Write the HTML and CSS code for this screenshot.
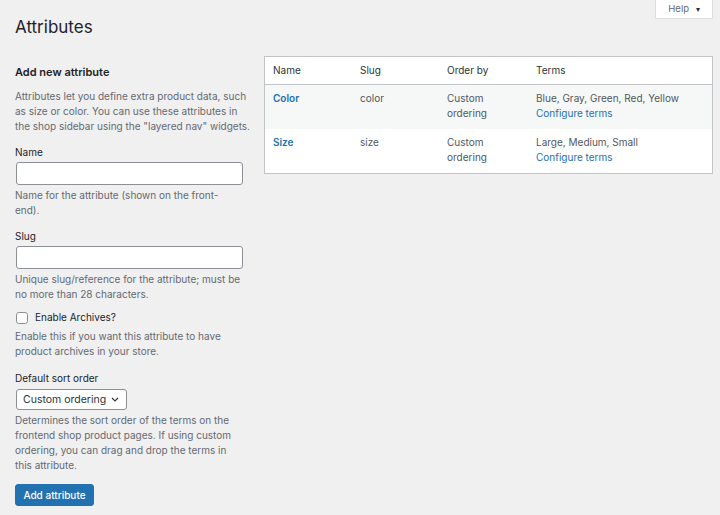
FILE: index.html
```html
<!DOCTYPE html>
<html lang="en">
<head>
    <meta charset="UTF-8">
    <meta name="viewport" content="width=device-width, initial-scale=1.0">
    <title>Attributes</title>
    <link rel="stylesheet" href="styles.css">
</head>
<body>
    <div class="help-tab">Help <span class="caret">&#9662;</span></div>
    <div class="wrap">
        <h1>Attributes</h1>
        <div class="columns">
            <div class="col-left">
                <h2>Add new attribute</h2>
                <p class="intro">Attributes let you define extra product data, such as size or color. You can use these attributes in the shop sidebar using the "layered nav" widgets.</p>

                <label class="field-label" for="attr-name">Name</label>
                <input type="text" id="attr-name" class="text-input">
                <p class="help">Name for the attribute (shown on the front-end).</p>

                <label class="field-label" for="attr-slug">Slug</label>
                <input type="text" id="attr-slug" class="text-input">
                <p class="help">Unique slug/reference for the attribute; must be no more than 28 characters.</p>

                <label class="check-row"><span class="checkbox"></span>Enable Archives?</label>
                <p class="help">Enable this if you want this attribute to have product archives in your store.</p>

                <label class="field-label sort-label">Default sort order</label>
                <div class="select">Custom ordering
                    <svg width="8" height="5" viewBox="0 0 8 5"><path d="M1 1l3 3 3-3" fill="none" stroke="#2c3338" stroke-width="1.1"/></svg>
                </div>
                <p class="help">Determines the sort order of the terms on the frontend shop product pages. If using custom ordering, you can drag and drop the terms in this attribute.</p>

                <button class="button-primary">Add attribute</button>
            </div>
            <div class="col-right">
                <table class="attr-table">
                    <thead>
                        <tr>
                            <th class="c-name">Name</th>
                            <th class="c-slug">Slug</th>
                            <th class="c-order">Order by</th>
                            <th>Terms</th>
                        </tr>
                    </thead>
                    <tbody>
                        <tr class="alt">
                            <td><a href="#" class="row-title">Color</a></td>
                            <td>color</td>
                            <td>Custom<br>ordering</td>
                            <td>Blue, Gray, Green, Red, Yellow<br><a href="#">Configure terms</a></td>
                        </tr>
                        <tr>
                            <td><a href="#" class="row-title">Size</a></td>
                            <td>size</td>
                            <td>Custom<br>ordering</td>
                            <td>Large, Medium, Small<br><a href="#">Configure terms</a></td>
                        </tr>
                    </tbody>
                </table>
            </div>
        </div>
    </div>
</body>
</html>
```

FILE: styles.css
```css
body {
    margin: 0;
    background-color: #f0f0f1;
    font-family: Inter, "Liberation Sans", Arial, sans-serif;
    font-size: 10px;
    line-height: 15px;
    color: #50575e;
}
.help-tab {
    position: absolute;
    top: 0;
    right: 7px;
    width: 58px;
    height: 19px;
    box-sizing: border-box;
    background-color: #fff;
    border: 1px solid #dcdcde;
    border-top: none;
    font-size: 9.5px;
    line-height: 18px;
    color: #646970;
    text-align: center;
}
.help-tab .caret {
    margin-left: 4px;
    font-size: 8px;
    color: #2c3338;
}
.wrap {
    padding: 0 7px 0 15px;
}
h1 {
    margin: 15px 0 0;
    font-size: 17px;
    line-height: 24px;
    font-weight: 400;
    color: #1d2327;
}
.columns {
    display: flex;
    gap: 13px;
    margin-top: 17px;
}
.col-left {
    width: 236px;
    flex-shrink: 0;
}
.col-right {
    flex: 1;
}
h2 {
    margin: 8px 0 0;
    font-size: 11px;
    line-height: 16px;
    font-weight: 600;
    color: #1d2327;
}
.intro {
    margin: 9px 0 0;
    color: #646970;
}
.field-label {
    display: block;
    margin-top: 11px;
    color: #1d2327;
}
.text-input {
    display: block;
    width: 227px;
    height: 23px;
    margin: 2px 0 0 1px;
    box-sizing: border-box;
    border: 1px solid #8c8f94;
    border-radius: 3px;
    background-color: #fff;
}
.help {
    max-width: 226px;
    margin: 3px 0 0;
    color: #646970;
}
.check-row {
    display: flex;
    align-items: center;
    margin-top: 8px;
    color: #1d2327;
    line-height: 15px;
}
.checkbox {
    width: 12px;
    height: 12px;
    box-sizing: border-box;
    margin: 0 7px 0 1px;
    border: 1px solid #8c8f94;
    border-radius: 3px;
    background-color: #fff;
}
.check-row + .help {
    margin-top: 4px;
}
.sort-label {
    margin-top: 12px;
}
.select {
    display: flex;
    align-items: center;
    justify-content: space-between;
    width: 111px;
    height: 21px;
    margin: 3px 0 0 1px;
    padding: 0 7px 0 6px;
    box-sizing: border-box;
    border: 1px solid #8c8f94;
    border-radius: 3px;
    background-color: #fff;
    font-size: 10.5px;
    color: #2c3338;
}
.select + .help {
    margin-top: 3px;
}
.button-primary {
    display: block;
    margin-top: 11px;
    width: 79px;
    height: 22px;
    border: 1px solid #2271b1;
    border-radius: 3px;
    background-color: #2271b1;
    color: #fff;
    font-family: inherit;
    font-size: 10px;
    font-weight: 500;
    padding: 0;
}
.attr-table {
    width: 100%;
    border-collapse: collapse;
    background-color: #fff;
    border: 1px solid #c3c4c7;
}
.attr-table th {
    height: 27px;
    padding: 0 8px;
    text-align: left;
    font-weight: 400;
    color: #2c3338;
    border-bottom: 1px solid #c3c4c7;
}
.attr-table td {
    padding: 6px 8px 8px;
    vertical-align: top;
    color: #50575e;
}
.attr-table .c-name,
.attr-table .c-slug {
    width: 71px;
}
.attr-table .c-order {
    width: 73px;
}
.attr-table tr.alt {
    background-color: #f6f7f7;
}
.attr-table a {
    color: #2271b1;
    text-decoration: none;
}
.attr-table a.row-title {
    font-weight: 600;
}
```
